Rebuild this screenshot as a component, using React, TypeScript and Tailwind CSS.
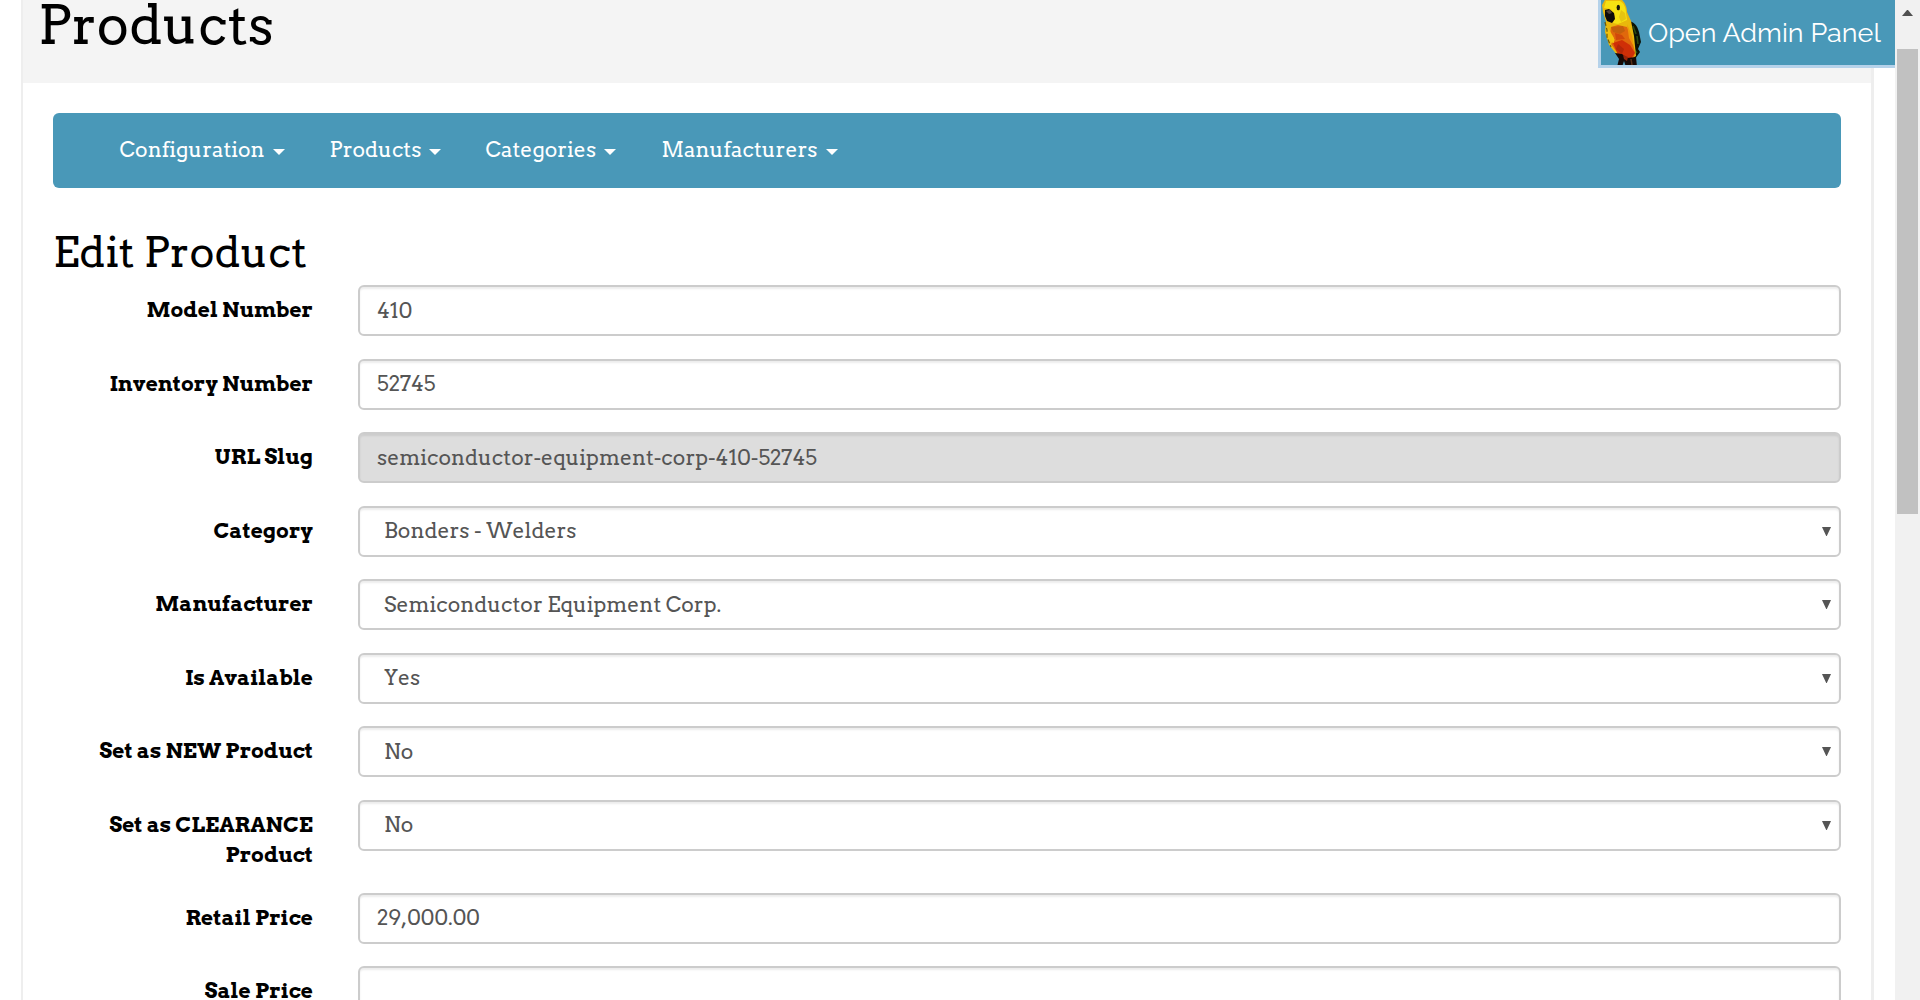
const menus = [
  { label: "Configuration", box: "w-[210px]" },
  { label: "Products", box: "w-[156px]" },
  { label: "Categories", box: "w-[176px]" },
  { label: "Manufacturers", box: "w-[180px]" },
];

type Row = { labels: string[]; value?: string; kind?: "select" | "disabled"; tall?: boolean };

const rows: Row[] = [
  { labels: ["Model Number"], value: "410" },
  { labels: ["Inventory Number"], value: "52745" },
  { labels: ["URL Slug"], value: "semiconductor-equipment-corp-410-52745", kind: "disabled" },
  { labels: ["Category"], value: "Bonders - Welders", kind: "select" },
  { labels: ["Manufacturer"], value: "Semiconductor Equipment Corp.", kind: "select" },
  { labels: ["Is Available"], value: "Yes", kind: "select" },
  { labels: ["Set as NEW Product"], value: "No", kind: "select" },
  { labels: ["Set as CLEARANCE", "Product"], value: "No", kind: "select", tall: true },
  { labels: ["Retail Price"], value: "29,000.00" },
  { labels: ["Sale Price"] },
];

function Field({ row }: { row: Row }) {
  const select = row.kind === "select";
  return (
    <div className={`flex shrink-0 items-start ${row.tall ? "h-[93px]" : "h-[73.5px]"}`}>
      <div className="flex w-[260px] flex-col items-end pt-[10px] text-[21px] leading-[30px] font-bold whitespace-nowrap text-black">
        {row.labels.map((text) => (
          <span key={text}>{text}</span>
        ))}
      </div>
      <div
        className={`ml-[45px] flex h-[51px] w-[1483px] items-center justify-between rounded-[6px] border-2 border-[#ccc] text-[21px] leading-[30px] text-[#555] shadow-[inset_0_2px_2px_rgba(0,0,0,0.075)] ${
          select ? "pr-[8px] pl-[24px]" : "pl-[17px]"
        } ${row.kind === "disabled" ? "bg-[#ddd]" : "bg-white"}`}
      >
        {row.value ? <span>{row.value}</span> : null}
        {select ? (
          <svg width="9" height="9" viewBox="0 0 9 9" className="shrink-0">
            <path d="M0 0H9L4.8 9H4.2Z" fill="#555" />
          </svg>
        ) : null}
      </div>
    </div>
  );
}

function Parrot() {
  return (
    <svg width="41" height="65" viewBox="0 0 41 65" className="shrink-0 overflow-hidden">
      <g className="blur-[0.5px]">
        <path d="M26 21C33 21 36 25 38 32L40 42L37 49L39 52L34 59L26 48Z" fill="#0c1206" />
        <path d="M32 26L35 34M36 36L37 44M33 49L36 53" stroke="#2c4a12" strokeWidth="1.6" fill="none" />
        <path d="M1 5L5 -2H19C24 2 26 7 26 12L30 21L33 36L35 56L29 60L17 56L8 45L4 32L5 22L2 12Z" fill="#e9b80c" />
        <path d="M5 1H19C23 3 25 8 25 13L26 20L17 24L12 23L14 16L10 9L3 8Z" fill="#f6e112" />
        <path d="M20 10L24 13L25 19L20 22L18 17Z" fill="#e6c410" />
        <path d="M10 27L17 25L26 27L30 36L34 52L33 58L23 56L15 51L10 44L14 40L9 34Z" fill="#e0680c" />
        <path d="M10 27L22 26L24 31L19 34L12 32Z" fill="#c4600c" />
        <path d="M14 33L21 35L24 39L15 40Z" fill="#d0480a" />
        <path d="M12 43L21 40L29 45L34 53L30 59L17 55Z" fill="#cf2f07" />
        <path d="M17 44L23 49L21 54L15 49Z" fill="#b32708" />
        <path d="M5 26L9 31L13 38L13 43L8 41L5 34Z" fill="#f4c20c" />
        <path d="M26 24L31 36L33 47L28 38Z" fill="#f0960a" />
        <path d="M4 10L8 9L13 13L14 19L11 23L6 21L4 16Z" fill="#0d0b0a" />
        <path d="M5 11L9 10L11 13L8 14Z" fill="#4d4038" />
        <ellipse cx="17.3" cy="7.5" rx="1.7" ry="2.8" fill="#17150a" />
        <path d="M4 22L6 30L6 37L10 47" stroke="#6e5a0c" strokeWidth="1.2" strokeDasharray="4 2" fill="none" />
        <path d="M14 53L21 54L26 58L35 57L36 67H25L23 61L21 67H16L18 59Z" fill="#160906" />
        <path d="M22 55L27 57L26 61L23 59Z" fill="#9a2409" />
        <path d="M30 59L31 65" stroke="#593018" strokeWidth="1.5" />
      </g>
    </svg>
  );
}

export default function App() {
  return (
    <div className="relative flex h-[1000px] w-[1920px] overflow-hidden bg-white font-['Arvo','DejaVu_Serif_Condensed',serif]">
      <div className="flex h-full w-[1895px] shrink-0 pl-[21px]">
        <main className="flex h-full w-[1853px] flex-col overflow-hidden border-r-[3px] border-l-2 border-[#eee]">
          <header className="h-[83px] shrink-0 bg-[#f4f4f4] pl-[15px]">
            <h1 className="-mt-[10px] text-[54px] leading-[70px] text-black">Products</h1>
          </header>
          <div className="flex flex-col pt-[30px] pl-[30px]">
            <nav className="flex h-[75px] w-[1788px] shrink-0 items-center rounded-[6px] bg-[#4998b8] pl-[66.6px] text-[21px] leading-[30px] text-white">
              {menus.map((m) => (
                <div key={m.label} className={`flex items-center pb-px ${m.box}`}>
                  <span>{m.label}</span>
                  <svg width="12" height="6" viewBox="0 0 12 6" className="mt-[4px] ml-[8px]">
                    <path d="M0 0H12L6 6Z" fill="#fff" />
                  </svg>
                </div>
              ))}
            </nav>
            <h2 className="mt-[34px] h-[63px] shrink-0 text-[42px] leading-[60px] text-black">Edit Product</h2>
            <form className="flex flex-col">
              {rows.map((row) => (
                <Field key={row.labels[0]} row={row} />
              ))}
            </form>
          </div>
        </main>
      </div>
      <div className="flex w-[25px] shrink-0 flex-col items-center bg-[#f1f1f1] pt-[10px]">
        <svg width="11" height="6" viewBox="0 0 11 6" className="shrink-0">
          <path d="M0 6L5 0H6L11 6Z" fill="#505050" />
        </svg>
        <div className="mt-[33px] h-[465px] w-[21px] shrink-0 bg-[#c1c1c1]" />
      </div>
      <button className="absolute top-0 right-[25px] flex h-[68px] w-[297px] items-center border-b-[3px] border-l-[3px] border-[#b5d2ea] bg-[#4998b8] font-['Raleway','Lato',sans-serif] text-[27px] leading-[36px] text-white">
        <Parrot />
        <span className="ml-[6px]">Open Admin Panel</span>
      </button>
    </div>
  );
}
